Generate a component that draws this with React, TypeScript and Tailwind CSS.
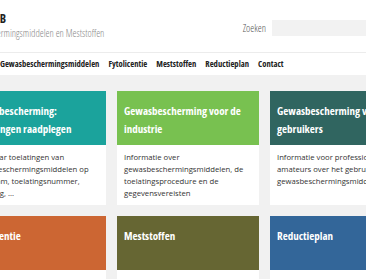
export default function App() {
  const cards = [
    {
      title: "Gewasbescherming: Toelatingen raadplegen",
      body: "Zoek naar toelatingen van gewasbeschermingsmiddelen op hun naam, toelatingsnummer, aanvraag, ...",
      color: "bg-[#1ba39c]",
    },
    {
      title: "Gewasbescherming voor de industrie",
      body: "Informatie over gewasbeschermingsmiddelen, de toelatingsprocedure en de gegevensvereisten",
      color: "bg-[#78c150]",
    },
    {
      title: "Gewasbescherming voor gebruikers",
      body: "Informatie voor professionele en amateurs over het gebruik van gewasbeschermingsmiddelen",
      color: "bg-[#306560]",
    },
    { title: "Fytolicentie", body: "", color: "bg-[#cc6633]" },
    { title: "Meststoffen", body: "", color: "bg-[#666633]" },
    { title: "Reductieplan", body: "", color: "bg-[#336699]" },
  ];

  const nav = ["Gewasbeschermingsmiddelen", "Fytolicentie", "Meststoffen", "Reductieplan", "Contact"];

  return (
    <div className="h-[279px] w-[366px] overflow-hidden bg-white font-['Open_Sans',sans-serif]">
      <div className="-ml-[36px] w-[448px]">
        {/* header */}
        <div className="flex h-[52px] justify-between">
          <div className="pt-[12px]">
            <div className="pl-[18px] text-[12px] font-bold leading-[13px] text-[#222] font-stretch-condensed">CTGB</div>
            <div className="-ml-[8px] mt-[1px] whitespace-nowrap text-[10px] font-light leading-[14px] text-[#888] font-stretch-condensed">
              Gewasbeschermingsmiddelen en Meststoffen
            </div>
          </div>
          <div className="flex flex-col items-end">
            <div className="pr-[20px] pt-[2px] text-[7px] font-bold leading-[8px] text-[#222]">NL</div>
            <div className="mt-[10px] flex items-center">
              <span className="mr-[6px] text-[10px] font-light text-[#555] font-stretch-condensed">Zoeken</span>
              <div className="h-[16px] w-[140px] bg-[#f2f2f2]" />
            </div>
          </div>
        </div>

        {/* nav */}
        <div className="flex h-[23px] items-center gap-[9px] border-t border-[#ececec] pl-[36px] text-[8.6px] font-bold text-[#222] font-stretch-condensed">
          {nav.map((n) => (
            <span key={n}>{n}</span>
          ))}
        </div>

        {/* tiles */}
        <div className="grid grid-cols-3 gap-[11px] bg-[#f1f1f1] pt-[16px]">
          {cards.map((c) => (
            <div key={c.title}>
              <div
                className={`${c.color} min-h-[54px] px-[7px] pt-[11px] text-[11px] font-bold leading-[18px] text-white font-stretch-condensed`}
              >
                {c.title}
              </div>
              <div className="h-[60px] bg-white px-[7px] pt-[6px] text-[7.7px] leading-[12px] text-[#333]">
                {c.body}
              </div>
            </div>
          ))}
        </div>
      </div>
    </div>
  );
}
